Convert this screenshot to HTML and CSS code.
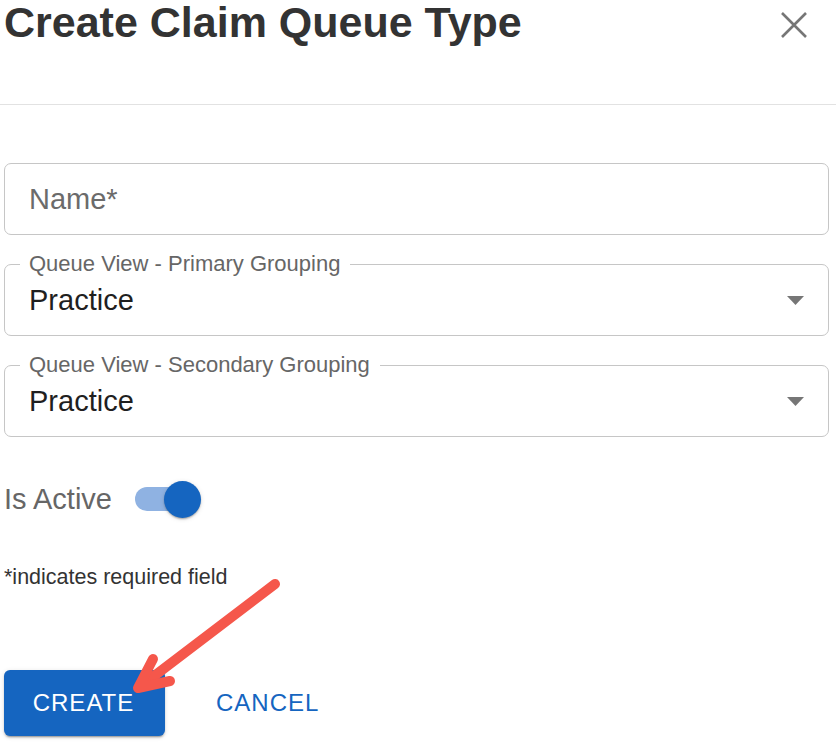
FILE: index.html
```html
<!DOCTYPE html>
<html>
<head>
<meta charset="utf-8">
<link rel="stylesheet" href="styles.css">
</head>
<body>
<div class="dialog">
  <header class="head">
    <h1 class="title">Create Claim Queue Type</h1>
    <button class="close" aria-label="close">
      <svg width="26" height="26" viewBox="0 0 26 26"><path d="M1 1L25 25M25 1L1 25" stroke="#767676" stroke-width="2.6" fill="none"/></svg>
    </button>
  </header>
  <form class="form">
    <div class="field">
      <span class="placeholder">Name*</span>
    </div>
    <div class="field select">
      <span class="legend">Queue View - Primary Grouping</span>
      <span class="value">Practice</span>
      <svg class="caret" width="17" height="9" viewBox="0 0 17 9"><path d="M0 0H17L8.5 9Z" fill="#767676"/></svg>
    </div>
    <div class="field select">
      <span class="legend">Queue View - Secondary Grouping</span>
      <span class="value">Practice</span>
      <svg class="caret" width="17" height="9" viewBox="0 0 17 9"><path d="M0 0H17L8.5 9Z" fill="#767676"/></svg>
    </div>
    <div class="active-row">
      <span class="active-label">Is Active</span>
      <span class="switch"><span class="track"></span><span class="thumb"></span></span>
    </div>
    <p class="required">*indicates required field</p>
    <div class="actions">
      <button type="button" class="btn primary">CREATE</button>
      <button type="button" class="btn text">CANCEL</button>
    </div>
  </form>
</div>
<svg class="arrow" width="836" height="748" viewBox="0 0 836 748">
  <g stroke="#f5574b" stroke-width="10" stroke-linecap="round" stroke-linejoin="round" fill="none">
    <path d="M275 584L141 686"/>
    <path d="M153 659L138 688L170 681"/>
  </g>
</svg>
</body>
</html>
```
FILE: styles.css
```css
html, body {
  margin: 0;
  padding: 0;
  background: #fff;
}
body {
  font-family: "Liberation Sans", Arial, sans-serif;
  width: 836px;
  height: 748px;
  overflow: hidden;
  position: relative;
}
.dialog {
  padding: 0 7px 0 4px;
}
.head {
  height: 104px;
  display: flex;
  align-items: flex-start;
  justify-content: space-between;
  border-bottom: 1px solid #e2e2e2;
  margin: 0 -7px 0 -4px;
  padding: 0 0 0 4px;
}
.title {
  margin: 0;
  font-size: 43px;
  line-height: 45px;
  font-weight: 700;
  color: #333;
}
.close {
  border: 0;
  background: none;
  padding: 0;
  margin: 12px 29px 0 0;
  width: 26px;
  height: 26px;
  display: flex;
}
.form {
  padding-top: 58px;
  display: flex;
  flex-direction: column;
}
.field {
  position: relative;
  box-sizing: border-box;
  height: 72px;
  border: 1px solid #c6c6c6;
  border-radius: 7px;
  display: flex;
  align-items: center;
  padding-left: 24px;
  margin-bottom: 29px;
}
.placeholder {
  font-size: 29px;
  color: #6b6b6b;
}
.value {
  font-size: 29px;
  color: #1f1f1f;
}
.legend {
  position: absolute;
  left: 15px;
  top: -14px;
  background: #fff;
  padding: 0 10px 0 9px;
  font-size: 22px;
  line-height: 25px;
  color: #666;
}
.caret {
  position: absolute;
  right: 24px;
  top: 31px;
}
.active-row {
  display: flex;
  align-items: center;
  height: 68px;
  margin-top: -1px;
}
.active-label {
  font-size: 29px;
  color: #666;
}
.switch {
  position: relative;
  width: 68px;
  height: 38px;
  margin-left: 23px;
  display: inline-block;
}
.track {
  position: absolute;
  left: 0;
  top: 7px;
  width: 61px;
  height: 24px;
  border-radius: 12px;
  background: #8fb2e2;
}
.thumb {
  position: absolute;
  left: 29px;
  top: 1px;
  width: 37px;
  height: 37px;
  border-radius: 50%;
  background: #1565c0;
  box-shadow: 0 2px 2px -1px rgba(0,0,0,0.2), 0 1px 2px rgba(0,0,0,0.14), 0 1px 5px rgba(0,0,0,0.12);
}
.required {
  margin: 32px 0 0;
  font-size: 21.5px;
  line-height: 24px;
  color: #333;
}
.actions {
  display: flex;
  align-items: center;
  gap: 51px;
  margin-top: 81px;
}
.btn {
  font-family: "Liberation Sans", Arial, sans-serif;
  font-size: 24px;
  letter-spacing: 1px;
  border: 0;
  background: none;
  padding: 0;
  cursor: pointer;
}
.btn.primary {
  width: 161px;
  height: 66px;
  border-radius: 6px;
  background: #1565c0;
  color: #fff;
  padding-right: 2px;
  box-shadow: 0 3px 1px -2px rgba(0,0,0,0.2), 0 2px 2px rgba(0,0,0,0.14), 0 1px 5px rgba(0,0,0,0.12);
}
.btn.text {
  color: #1565c0;
  height: 66px;
}
.arrow {
  position: absolute;
  left: 0;
  top: 0;
  pointer-events: none;
}
```
